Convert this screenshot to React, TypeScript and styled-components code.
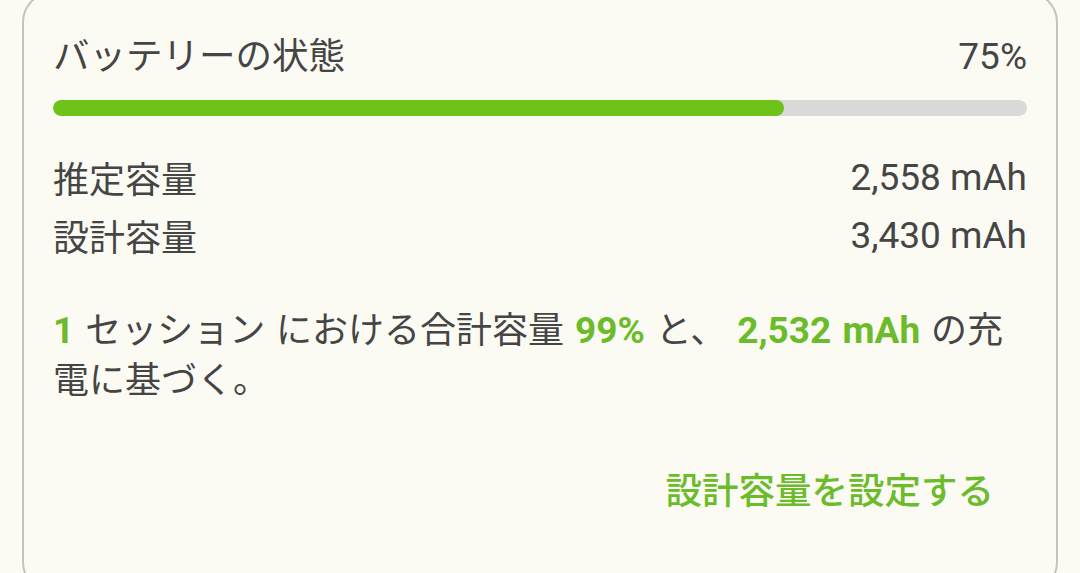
import styled, { createGlobalStyle } from "styled-components";

const GlobalStyle = createGlobalStyle`
  html, body {
    margin: 0;
    padding: 0;
    background: #fbfbf4;
    height: 573px;
    overflow: hidden;
  }
  body {
    font-family: Roboto, "Noto Sans CJK JP", sans-serif;
    color: #454545;
  }
`;

const Card = styled.section`
  box-sizing: border-box;
  margin: -8px 0 0 22px;
  width: 1036px;
  height: 600px;
  border: 2px solid #c4c4bc;
  border-radius: 30px;
  padding: 41px 29px 0 29px;
  display: flex;
  flex-direction: column;
`;

const Header = styled.div`
  display: flex;
  justify-content: space-between;
  align-items: center;
  font-size: 37px;
  line-height: 44px;
`;

const Title = styled.span`
  font-size: 36.5px;
`;

const Track = styled.div`
  margin-top: 21px;
  height: 16px;
  border-radius: 8px;
  background: #d9d9d7;
  overflow: hidden;
`;

const Fill = styled.div`
  height: 100%;
  border-radius: 8px;
  background: #6fc21a;
`;

const Rows = styled.div`
  margin-top: 32px;
  display: flex;
  flex-direction: column;
`;

const Row = styled.div`
  display: flex;
  justify-content: space-between;
  align-items: center;
  height: 58px;
  font-size: 36px;
`;

const Value = styled.span`
  font-size: 37px;
`;

const Summary = styled.p`
  margin: 42px 0 0 0;
  padding-right: 15px;
  font-size: 36px;
  line-height: 50px;
  word-spacing: 2px;
`;

const Em = styled.strong`
  color: #6cbb2b;
  font-weight: 700;
  font-size: 37px;
`;

const Actions = styled.div`
  margin-top: 61px;
  display: flex;
  justify-content: flex-end;
`;

const LinkButton = styled.button`
  border: none;
  background: none;
  padding: 0;
  margin-right: 33px;
  font-family: inherit;
  font-size: 36.5px;
  line-height: 50px;
  font-weight: 500;
  color: #6cbb2b;
  cursor: pointer;
`;

export default function App() {
  const percent = 75;

  return (
    <>
      <GlobalStyle />
      <Card>
        <Header>
          <Title>バッテリーの状態</Title>
          <span>{percent}%</span>
        </Header>
        <Track>
          <Fill style={{ width: `${percent}%` }} />
        </Track>
        <Rows>
          <Row>
            <span>推定容量</span>
            <Value>2,558 mAh</Value>
          </Row>
          <Row>
            <span>設計容量</span>
            <Value>3,430 mAh</Value>
          </Row>
        </Rows>
        <Summary>
          <Em>1</Em> セッション における合計容量 <Em>99%</Em> と、 <Em>2,532 mAh</Em>{" "}
          の充電に基づく。
        </Summary>
        <Actions>
          <LinkButton>設計容量を設定する</LinkButton>
        </Actions>
      </Card>
    </>
  );
}
